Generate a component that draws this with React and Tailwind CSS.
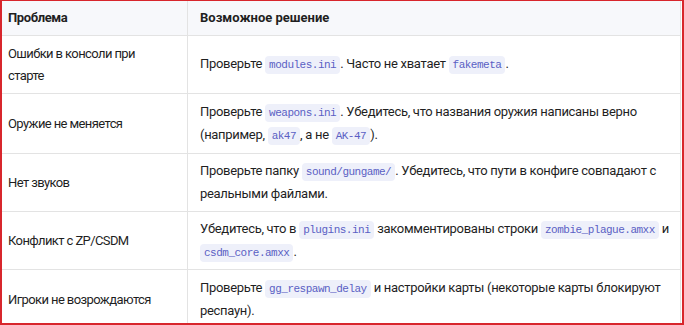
import React from "react";

const C = ({ children }) => (
  <code className="rounded-[4px] bg-[#eef0fa] px-[4px] py-[3px] text-[11px] tracking-[-0.5px] text-[#5a5fc4] [font-family:'Liberation_Mono',monospace]">
    {children}
  </code>
);

const rows = [
  {
    p: "Ошибки в консоли при старте",
    s: (
      <>
        Проверьте <C>modules.ini</C>. Часто не хватает <C>fakemeta</C>.
      </>
    ),
    h: "h-[58px]",
  },
  {
    p: "Оружие не меняется",
    s: (
      <>
        Проверьте <C>weapons.ini</C>. Убедитесь, что названия оружия написаны верно
        <br />
        (например, <C>ak47</C>, а не <C>AK-47</C>).
      </>
    ),
    h: "h-[60px]",
  },
  {
    p: "Нет звуков",
    s: (
      <>
        Проверьте папку <C>sound/gungame/</C>. Убедитесь, что пути в конфиге совпадают с
        <br />
        реальными файлами.
      </>
    ),
    h: "h-[58px]",
  },
  {
    p: "Конфликт с ZP/CSDM",
    s: (
      <>
        Убедитесь, что в <C>plugins.ini</C> закомментированы строки <C>zombie_plague.amxx</C> и
        <br />
        <C>csdm_core.amxx</C>.
      </>
    ),
    h: "h-[58px]",
  },
  {
    p: "Игроки не возрождаются",
    s: (
      <>
        Проверьте <C>gg_respawn_delay</C> и настройки карты (некоторые карты блокируют
        <br />
        респаун).
      </>
    ),
    h: "h-[60px]",
  },
];

export default function App() {
  return (
    <div className="h-[325px] w-[684px] overflow-hidden border-2 border-t border-[#d8262c] bg-white text-[13px] leading-[22px] text-[#1f1f1f] [font-family:Roboto,sans-serif]">
      <div className="w-[679px] border-r border-[#e3e3e3]">
        <div className="flex h-[35px] border-b border-[#e3e3e3] bg-[#f7f8fb] font-bold">
          <div className="flex w-[186px] items-center border-r border-[#e3e3e3] px-[6px] tracking-[-0.4px]">Проблема</div>
          <div className="flex flex-1 items-center px-[12px]">Возможное решение</div>
        </div>
        {rows.map((r, i) => (
          <div key={i} className={`flex ${r.h} border-b border-[#e3e3e3] tracking-[-0.3px]`}>
            <div className="flex w-[186px] items-center border-r border-[#e3e3e3] pl-[6px] pr-[20px] tracking-[-0.6px]">{r.p}</div>
            <div className="flex flex-1 items-center pl-[12px] pr-[2px] whitespace-nowrap">
              <div>{r.s}</div>
            </div>
          </div>
        ))}
      </div>
    </div>
  );
}
